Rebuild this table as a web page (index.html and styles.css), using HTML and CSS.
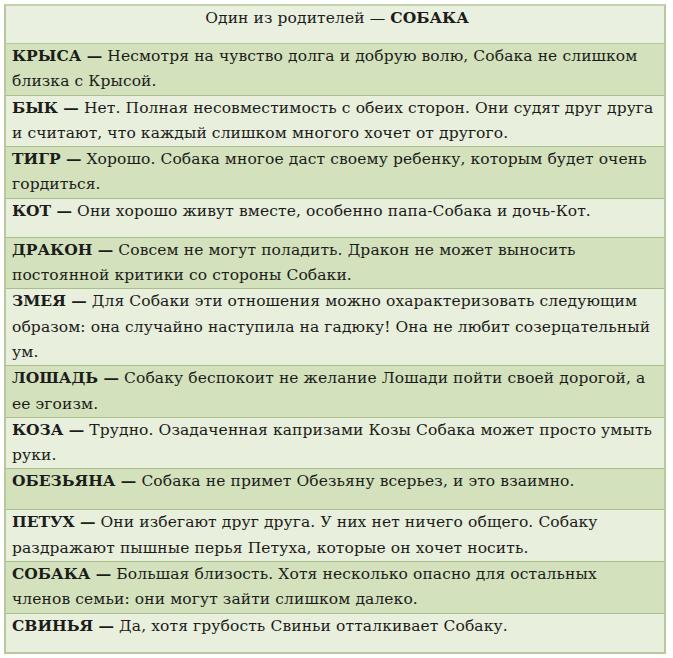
FILE: index.html
```html
<!DOCTYPE html>
<html lang="ru">
<head>
<meta charset="utf-8">
<link rel="stylesheet" href="styles.css">
</head>
<body>
<div class="table">
  <div class="row head">Один из родителей — <b>СОБАКА</b></div>
  <div class="row dark"><b>КРЫСА —</b> Несмотря на чувство долга и добрую волю, Собака не слишком<br>близка с Крысой.</div>
  <div class="row light"><b>БЫК —</b> Нет. Полная несовместимость с обеих сторон. Они судят друг друга<br>и считают, что каждый слишком многого хочет от другого.</div>
  <div class="row dark"><b>ТИГР —</b> Хорошо. Собака многое даст своему ребенку, которым будет очень<br>гордиться.</div>
  <div class="row light single"><b>КОТ —</b> Они хорошо живут вместе, особенно папа-Собака и дочь-Кот.</div>
  <div class="row dark"><b>ДРАКОН —</b> Совсем не могут поладить. Дракон не может выносить<br>постоянной критики со стороны Собаки.</div>
  <div class="row light"><b>ЗМЕЯ —</b> Для Собаки эти отношения можно охарактеризовать следующим<br>образом: она случайно наступила на гадюку! Она не любит созерцательный<br>ум.</div>
  <div class="row dark"><b>ЛОШАДЬ —</b> Собаку беспокоит не желание Лошади пойти своей дорогой, а<br>ее эгоизм.</div>
  <div class="row light"><b>КОЗА —</b> Трудно. Озадаченная капризами Козы Собака может просто умыть<br>руки.</div>
  <div class="row dark single tall"><b>ОБЕЗЬЯНА —</b> Собака не примет Обезьяну всерьез, и это взаимно.</div>
  <div class="row light"><b>ПЕТУХ —</b> Они избегают друг друга. У них нет ничего общего. Собаку<br>раздражают пышные перья Петуха, которые он хочет носить.</div>
  <div class="row dark"><b>СОБАКА —</b> Большая близость. Хотя несколько опасно для остальных<br>членов семьи: они могут зайти слишком далеко.</div>
  <div class="row light single last"><b>СВИНЬЯ —</b> Да, хотя грубость Свиньи отталкивает Собаку.</div>
</div>
</body>
</html>
```
FILE: styles.css
```css
html, body {
  margin: 0;
  padding: 0;
  background: #ffffff;
}
body {
  padding: 4px 6px 0 4px;
  font-family: "DejaVu Serif", "Liberation Serif", serif;
  font-size: 15.5px;
  letter-spacing: 0.1px;
  color: #1c1c1a;
}
.table {
  width: 662px;
  border: 2px solid #b7c99c;
  border-top-color: #c4d3ad;
  box-sizing: border-box;
  display: flex;
  flex-direction: column;
}
.row {
  padding: 0 2px 0 6px;
  line-height: 25.3px;
  border-bottom: 1px solid #a9be8a;
  white-space: nowrap;
}
.row.last {
  border-bottom: none;
}
.row b {
  font-weight: bold;
  letter-spacing: 0;
  line-height: 1;
}
.head {
  text-align: center;
  min-height: 37px;
  background: #eaf0e0;
  border-bottom-color: #b5c89a;
}
.dark {
  background: #d3e2bd;
}
.light {
  background: #e8efdc;
}
.single {
  min-height: 38px;
}
.single.tall {
  min-height: 40px;
}
```
